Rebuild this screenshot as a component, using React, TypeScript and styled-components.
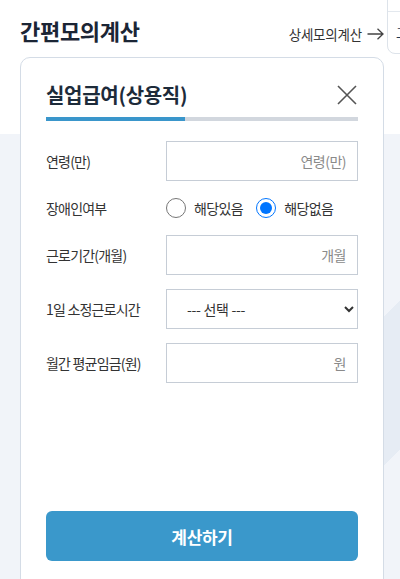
import React from "react";
import styled, { createGlobalStyle } from "styled-components";

const Global = createGlobalStyle`
  html, body { margin: 0; padding: 0; }
  body {
    font-family: "Noto Sans CJK KR", "Noto Sans", sans-serif;
    color: #333;
    overflow: hidden;
  }
  * { box-sizing: border-box; }
`;

const Page = styled.div`
  width: 400px;
  height: 579px;
  overflow: hidden;
  display: flex;
  align-items: flex-start;
  gap: 3px;
  padding-left: 20px;
  background:
    linear-gradient(#ffffff 0 134px, transparent 134px),
    linear-gradient(135deg, #f1f4f9 0 495px, #e6ecf4 495px 601px, #f1f4f9 601px);
`;

const Main = styled.div`
  width: 364px;
  flex: none;
  display: flex;
  flex-direction: column;
`;

const Header = styled.header`
  flex: none;
  height: 57px;
  padding-top: 3px;
  display: flex;
  align-items: center;
  justify-content: space-between;
`;

const PageTitle = styled.h1`
  margin: 0;
  font-size: 22px;
  line-height: 30px;
  font-weight: 700;
  color: #1b2535;
  letter-spacing: -0.3px;
`;

const DetailLink = styled.a`
  margin-top: 8px;
  display: flex;
  align-items: center;
  gap: 5px;
  font-size: 13.5px;
  line-height: 20px;
  color: #333;
  text-decoration: none;
  letter-spacing: -0.2px;
`;

const SideTab = styled.div`
  flex: none;
  width: 120px;
  height: 55px;
  margin-top: -1px;
  background: #fff;
  border: 1px solid #dde3ea;
  border-radius: 0 0 0 8px;
  display: flex;
  flex-direction: column;
  overflow: hidden;
`;

const SideTabTop = styled.div`
  height: 12px;
  border-bottom: 1px solid #e3e8ee;
`;

const SideTabText = styled.div`
  padding: 12px 0 0 8px;
  font-size: 13px;
  line-height: 18px;
  color: #1f3550;
  white-space: nowrap;
`;

const Card = styled.section`
  flex: none;
  background: #fff;
  border: 1px solid #d4dce6;
  border-radius: 10px;
  padding: 23px 25px 40px;
  display: flex;
  flex-direction: column;
`;

const CardHead = styled.div`
  display: flex;
  align-items: center;
  justify-content: space-between;
`;

const CardTitle = styled.h2`
  margin: 0;
  font-size: 20px;
  line-height: 28px;
  font-weight: 700;
  color: #1d2b3a;
  letter-spacing: -0.3px;
`;

const CloseButton = styled.button`
  border: none;
  background: none;
  padding: 0;
  width: 22px;
  height: 22px;
  display: flex;
  align-items: center;
  justify-content: center;
  cursor: pointer;
`;

const Progress = styled.div`
  margin-top: 8px;
  height: 4px;
  background: #d2d7de;
`;

const ProgressFill = styled.div`
  height: 100%;
  background: #3a96cb;
`;

const Form = styled.div`
  margin-top: 20px;
  display: flex;
  flex-direction: column;
  gap: 14px;
`;

const Row = styled.div<{ $h?: number }>`
  display: flex;
  align-items: center;
  height: ${(p) => p.$h ?? 40}px;
`;

const Label = styled.label`
  width: 120px;
  flex: none;
  font-size: 14px;
  color: #333;
  letter-spacing: -0.8px;
  white-space: nowrap;
`;

const TextInput = styled.input`
  width: 192px;
  height: 40px;
  border: 1px solid #c6cdd6;
  border-radius: 0;
  padding: 0 11px;
  text-align: right;
  font-family: inherit;
  font-size: 14px;
  color: #333;
  letter-spacing: -0.5px;
  outline: none;
  &::placeholder { color: #8a8a8a; }
`;

const Select = styled.select`
  width: 192px;
  height: 40px;
  border: 1px solid #c6cdd6;
  border-radius: 0;
  padding: 0 8px 0 16px;
  background: #fff;
  font-family: inherit;
  font-size: 14px;
  color: #333;
  letter-spacing: -0.3px;
  outline: none;
`;

const RadioGroup = styled.div`
  display: flex;
  align-items: center;
  gap: 13px;
`;

const RadioLabel = styled.label`
  display: flex;
  align-items: center;
  gap: 8px;
  font-size: 14px;
  color: #333;
  letter-spacing: -0.6px;
`;

const Radio = styled.input`
  width: 20px;
  height: 20px;
  margin: 0;
`;

const SubmitButton = styled.button`
  margin-top: 128px;
  height: 50px;
  border: none;
  border-radius: 6px;
  background: #3a98cb;
  color: #fff;
  font-family: inherit;
  font-size: 17px;
  font-weight: 700;
  letter-spacing: -0.3px;
  cursor: pointer;
`;

export default function App() {
  return (
    <>
      <Global />
      <Page>
        <Main>
          <Header>
            <PageTitle>간편모의계산</PageTitle>
            <DetailLink href="#">
              상세모의계산
              <svg width="17" height="12" viewBox="0 0 17 12" fill="none">
                <path d="M0.5 6H16M10.5 0.8L16 6L10.5 11.2" stroke="#444" strokeWidth="1.3" />
              </svg>
            </DetailLink>
          </Header>
          <Card>
            <CardHead>
              <CardTitle>실업급여(상용직)</CardTitle>
              <CloseButton aria-label="닫기">
                <svg width="20" height="20" viewBox="0 0 20 20">
                  <path d="M1 1L19 19M19 1L1 19" stroke="#555" strokeWidth="1.6" />
                </svg>
              </CloseButton>
            </CardHead>
            <Progress>
              <ProgressFill style={{ width: "44.6%" }} />
            </Progress>
            <Form>
              <Row>
                <Label>연령(만)</Label>
                <TextInput placeholder="연령(만)" />
              </Row>
              <Row $h={26}>
                <Label>장애인여부</Label>
                <RadioGroup>
                  <RadioLabel>
                    <Radio type="radio" name="dis" />
                    해당있음
                  </RadioLabel>
                  <RadioLabel>
                    <Radio type="radio" name="dis" defaultChecked />
                    해당없음
                  </RadioLabel>
                </RadioGroup>
              </Row>
              <Row>
                <Label>근로기간(개월)</Label>
                <TextInput placeholder="개월" />
              </Row>
              <Row>
                <Label>1일 소정근로시간</Label>
                <Select defaultValue="">
                  <option value="">--- 선택 ---</option>
                </Select>
              </Row>
              <Row>
                <Label>월간 평균임금(원)</Label>
                <TextInput placeholder="원" />
              </Row>
            </Form>
            <SubmitButton>계산하기</SubmitButton>
          </Card>
        </Main>
        <SideTab>
          <SideTabTop />
          <SideTabText>고용보험</SideTabText>
        </SideTab>
      </Page>
    </>
  );
}
